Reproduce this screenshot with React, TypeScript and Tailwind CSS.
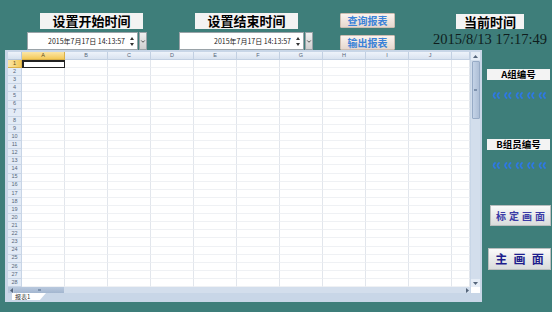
import { ChevronDown } from 'lucide-react'

const COLS = ['A', 'B', 'C', 'D', 'E', 'F', 'G', 'H', 'I', 'J', '']
const ROWS = Array.from({ length: 28 }, (_, i) => i + 1)

const CJK = { fontFamily: '"Noto Sans CJK SC", "Noto Sans", sans-serif' }

function DatePicker({ width }: { width: string }) {
  return (
    <div className={`flex h-[18px] ${width}`}>
      <div className="flex flex-1 items-center justify-end bg-white border border-[#9aa3a8] pr-[2px]">
        <span className="text-[7px] leading-none text-[#222] mr-[4px]" style={CJK}>
          2015年7月17日 14:13:57
        </span>
        <div className="flex flex-col items-center justify-center w-[6px]">
          <svg width="4" height="3" viewBox="0 0 4 3"><path d="M0 3 L2 0 L4 3 Z" fill="#333" /></svg>
          <svg width="4" height="3" viewBox="0 0 4 3" className="mt-[3px]"><path d="M0 0 L2 3 L4 0 Z" fill="#333" /></svg>
        </div>
      </div>
      <div className="ml-[1px] w-[8px] bg-gradient-to-b from-[#f0f0f0] to-[#cfcfcf] border border-[#9aa3a8] flex items-center justify-center">
        <ChevronDown size={7} strokeWidth={3} className="text-[#222]" />
      </div>
    </div>
  )
}

function Label({ text, className }: { text: string; className: string }) {
  return (
    <div className={`bg-[#f3f3f3] flex items-center justify-center font-bold text-black whitespace-nowrap ${className}`} style={CJK}>
      {text}
    </div>
  )
}

function Dots() {
  return (
    <svg width="60" height="7" viewBox="0 0 60 7" className="mx-auto">
      {[0, 1, 2, 3, 4].map((i) => (
        <g key={i} stroke="#2e78e6" strokeWidth="1.7" fill="none" strokeLinecap="round">
          <path d={`M${6 + i * 11.5} 1 Q${3 + i * 11.5} 3.5 ${6 + i * 11.5} 6`} />
          <path d={`M${10 + i * 11.5} 1 Q${7 + i * 11.5} 3.5 ${10 + i * 11.5} 6`} />
        </g>
      ))}
    </svg>
  )
}

function Sheet() {
  return (
    <div className="ml-[5px] w-[477px] h-[252px] bg-[#c8d6e7] flex flex-col pl-[3px] pt-[2px] pr-[2px]">
      <div className="flex h-[235px]">
        {/* grid */}
        <div className="w-[462px] bg-white flex flex-col">
          <div className="flex h-[8px]">
            <div className="w-[14px] bg-gradient-to-b from-[#eef3fa] to-[#d6e1ef] border-r border-b border-[#b6c6da]" />
            {COLS.map((c, i) => (
              <div
                key={i}
                className={`${i === 10 ? 'flex-1' : 'w-[43px]'} flex items-center justify-center text-[5.5px] leading-none border-r border-b ${
                  c === 'A'
                    ? 'bg-gradient-to-b from-[#fbe6a6] to-[#f3c955] border-[#d9b04a] text-[#5a4a20]'
                    : 'bg-gradient-to-b from-[#eef3fa] to-[#d9e3f0] border-[#c2d0e2] text-[#56667a]'
                }`}
                style={{ fontFamily: '"Liberation Sans", sans-serif' }}
              >
                {c}
              </div>
            ))}
          </div>
          <div className="flex flex-col flex-1">
            {ROWS.map((r) => (
              <div key={r} className="flex flex-1">
                <div
                  className={`w-[14px] flex items-center justify-center text-[5.5px] leading-none border-r border-b ${
                    r === 1
                      ? 'bg-gradient-to-r from-[#fbe6a6] to-[#f3c955] border-[#d9b04a] text-[#5a4a20]'
                      : 'bg-[#e3ebf6] border-[#c8d5e6] text-[#56667a]'
                  }`}
                  style={{ fontFamily: '"Liberation Sans", sans-serif' }}
                >
                  {r}
                </div>
                {COLS.map((c, i) => (
                  <div
                    key={i}
                    className={`${i === 10 ? 'flex-1' : 'w-[43px]'} border-r border-b ${
                      r === 1 && i === 0 ? 'border-2 border-[#222]' : 'border-r-[#e2e6ec] border-b-[#eff1f4]'
                    }`}
                  />
                ))}
              </div>
            ))}
          </div>
        </div>
        {/* vertical scrollbar */}
        <div className="ml-[1px] w-[9px] bg-[#d3deec] flex flex-col items-center">
          <div className="h-[8px] w-full flex items-center justify-center bg-[#e6edf6]">
            <svg width="5" height="3" viewBox="0 0 5 3"><path d="M0 3 L2.5 0 L5 3 Z" fill="#55657a" /></svg>
          </div>
          <div className="mt-[1px] h-[58px] w-[8px] rounded-[1px] bg-gradient-to-r from-[#c4d3e7] to-[#aebfd6] border border-[#97abc6] flex items-center justify-center">
            <div className="w-[3px] h-[2px] bg-[#7d92ae]" />
          </div>
          <div className="flex-1" />
          <div className="h-[8px] w-full flex items-center justify-center bg-[#e6edf6]">
            <svg width="5" height="3" viewBox="0 0 5 3"><path d="M0 0 L2.5 3 L5 0 Z" fill="#55657a" /></svg>
          </div>
        </div>
      </div>
      {/* horizontal scrollbar */}
      <div className="flex h-[6px]">
        <div className="w-[462px] flex bg-[#d3deec]">
          <div className="w-[6px] flex items-center justify-center bg-[#b7c7dc]">
            <svg width="3" height="5" viewBox="0 0 3 5"><path d="M3 0 L0 2.5 L3 5 Z" fill="#55657a" /></svg>
          </div>
          <div className="w-[50px] bg-gradient-to-b from-[#b9c9de] to-[#a3b6cf] flex items-center justify-center">
            <div className="w-[3px] h-[2px] bg-[#7d92ae]" />
          </div>
          <div className="flex-1" />
          <div className="w-[6px] flex items-center justify-center">
            <svg width="3" height="5" viewBox="0 0 3 5"><path d="M0 0 L3 2.5 L0 5 Z" fill="#55657a" /></svg>
          </div>
        </div>
        <div className="ml-[1px] w-[9px] bg-white" />
      </div>
      {/* sheet tabs */}
      <div className="flex h-[9px] pl-[4px]">
        <div
          className="w-[34px] h-[7px] bg-white flex items-center pl-[3px] text-[6px] leading-none text-[#333] [clip-path:polygon(0_0,100%_0,82%_100%,0_100%)]"
          style={CJK}
        >
          报表1
        </div>
      </div>
    </div>
  )
}

export default function App() {
  return (
    <div className="w-[552px] h-[312px] bg-[#3e7e7a] flex flex-col overflow-hidden">
      {/* top bar */}
      <div className="flex h-[50px] pl-[27px] pt-[13px]">
        <div className="flex flex-col w-[120px]">
          <Label text="设置开始时间" className="ml-[13px] w-[103px] h-[16px] text-[13px]" />
          <div className="mt-[3px]">
            <DatePicker width="w-[120px]" />
          </div>
        </div>
        <div className="flex flex-col ml-[32px] w-[134px]">
          <Label text="设置结束时间" className="ml-[16px] w-[103px] h-[16px] text-[13px]" />
          <div className="mt-[3px]">
            <DatePicker width="w-[134px]" />
          </div>
        </div>
        <div className="flex flex-col ml-[27px] w-[55px]">
          {['查询报表', '输出报表'].map((t, i) => (
            <div
              key={t}
              className={`${i ? 'mt-[7px]' : ''} h-[15px] w-[55px] bg-gradient-to-b from-[#fbf3ee] to-[#e6d8cf] border border-[#cdbdb2] rounded-[1px] flex items-center justify-center text-[10px] text-[#3b82d8] font-bold`}
              style={CJK}
            >
              {t}
            </div>
          ))}
        </div>
        <div className="flex flex-col items-center ml-[38px] w-[114px]">
          <Label text="当前时间" className="w-[68px] h-[15px] text-[13px] mt-[1px]" />
          <div
            className="mt-[1px] text-[14.5px] leading-[18px] text-[#0f1d1d] whitespace-nowrap"
            style={{ fontFamily: '"Liberation Serif", serif' }}
          >
            2015/8/13 17:17:49
          </div>
        </div>
      </div>
      {/* body */}
      <div className="flex">
        <Sheet />
        <div className="ml-[5px] w-[64px] flex flex-col">
          <Label text="A组编号" className="mt-[19px] w-[63px] h-[11px] text-[9.5px] leading-none" />
          <div className="mt-[12px]">
            <Dots />
          </div>
          <Label text="B组员编号" className="mt-[40px] w-[63px] h-[11px] text-[9.5px] leading-none" />
          <div className="mt-[12px]">
            <Dots />
          </div>
          <div
            className="mt-[36px] ml-[3px] w-[61px] h-[21px] bg-gradient-to-b from-[#fafafa] to-[#d9dcdc] border border-[#b9bebe] flex items-center justify-center text-[10px] font-bold tracking-[3px] pl-[3px] whitespace-nowrap text-[#3b3ba6]"
            style={CJK}
          >
            标定画面
          </div>
          <div
            className="mt-[22px] ml-[1px] w-[63px] h-[22px] bg-gradient-to-b from-[#fafafa] to-[#d9dcdc] border border-[#b9bebe] flex items-center justify-around px-[3px] text-[12px] font-bold text-[#1d1d8c]"
            style={CJK}
          >
            <span>主</span>
            <span>画</span>
            <span>面</span>
          </div>
        </div>
      </div>
    </div>
  )
}
